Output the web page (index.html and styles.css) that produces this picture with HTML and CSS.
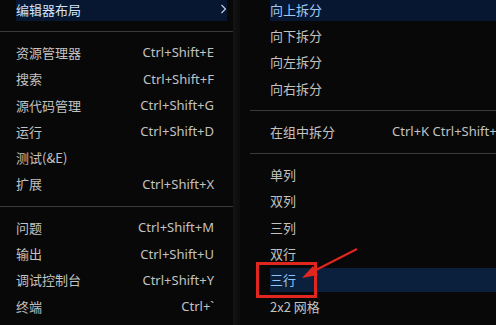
FILE: index.html
```html
<!DOCTYPE html>
<html lang="zh">
<head>
<meta charset="utf-8">
<link rel="stylesheet" href="styles.css">
</head>
<body>
<div class="screen">
  <div class="menu left">
    <div class="row hl"><span class="label">编辑器布局</span><svg class="chev" width="7" height="10" viewBox="0 0 7 10"><polyline points="1.5,1 5.5,5 1.5,9" fill="none" stroke="#c8d4e6" stroke-width="1.1"/></svg></div>
    <div class="sep"></div>
    <div class="row"><span class="label">资源管理器</span><span class="key">Ctrl+Shift+E</span></div>
    <div class="row"><span class="label">搜索</span><span class="key">Ctrl+Shift+F</span></div>
    <div class="row"><span class="label">源代码管理</span><span class="key">Ctrl+Shift+G</span></div>
    <div class="row"><span class="label">运行</span><span class="key">Ctrl+Shift+D</span></div>
    <div class="row"><span class="label">测试(&amp;E)</span></div>
    <div class="row"><span class="label">扩展</span><span class="key">Ctrl+Shift+X</span></div>
    <div class="sep"></div>
    <div class="row"><span class="label">问题</span><span class="key">Ctrl+Shift+M</span></div>
    <div class="row"><span class="label">输出</span><span class="key">Ctrl+Shift+U</span></div>
    <div class="row"><span class="label">调试控制台</span><span class="key">Ctrl+Shift+Y</span></div>
    <div class="row"><span class="label">终端</span><span class="key">Ctrl+`</span></div>
  </div>
  <div class="gutter"></div>
  <div class="menu right">
    <div class="row hl"><span class="label">向上拆分</span></div>
    <div class="row"><span class="label">向下拆分</span></div>
    <div class="row"><span class="label">向左拆分</span></div>
    <div class="row"><span class="label">向右拆分</span></div>
    <div class="sep"></div>
    <div class="row"><span class="label">在组中拆分</span><span class="key">Ctrl+K Ctrl+Shift+\</span></div>
    <div class="sep"></div>
    <div class="row"><span class="label">单列</span></div>
    <div class="row"><span class="label">双列</span></div>
    <div class="row"><span class="label">三列</span></div>
    <div class="row"><span class="label">双行</span></div>
    <div class="row hl2"><span class="label">三行</span></div>
    <div class="row"><span class="label">2x2 网格</span></div>
  </div>
  <div class="redbox"></div>
  <svg class="arrow" width="496" height="325" viewBox="0 0 496 325">
    <line x1="357" y1="249" x2="312" y2="272" stroke="#e0261f" stroke-width="2"/>
    <polygon points="302,278 313,266 318,275" fill="#e0261f"/>
  </svg>
</div>
</body>
</html>
```
FILE: styles.css
```css
html, body {
  margin: 0;
  padding: 0;
  background: #080808;
  overflow: hidden;
}
.screen {
  position: relative;
  width: 496px;
  height: 325px;
  overflow: hidden;
  display: flex;
  font-family: "Noto Sans", "Noto Sans CJK SC", sans-serif;
  font-size: 13px;
  color: #c2c2c2;
}
.menu {
  display: flex;
  flex-direction: column;
  margin-top: -4px;
  background: #080808;
}
.left {
  width: 233px;
  flex: none;
}
.gutter {
  width: 7px;
  flex: none;
  background: linear-gradient(to right, #141414, #0c0c0c);
}
.right {
  flex: 1;
  min-width: 0;
}
.row {
  height: 26.3px;
  flex: none;
  display: flex;
  align-items: center;
  justify-content: space-between;
  padding: 1px 0;
  box-sizing: border-box;
  background-clip: content-box;
  white-space: nowrap;
}
.left .row {
  padding-left: 16px;
  padding-right: 19px;
}
.right .row {
  padding-left: 30px;
  padding-right: 0;
}
.label {
  font-family: "Noto Sans CJK SC", sans-serif;
}
.right .key {
  margin-left: auto;
  padding-left: 10px;
  width: 104px;
  flex: none;
  overflow: hidden;
}
.hl {
  background-color: #071631;
  color: #d3e2f7;
}
.right .hl {
  color: #9ccaf4;
}
.left .row.hl {
  padding-right: 6px;
}
.chev {
  display: block;
  flex: none;
}
.hl2 {
  background-color: #0b203d;
  color: #8fc4f6;
}
.sep {
  height: 17px;
  flex: none;
}
.sep::after {
  content: "";
  display: block;
  height: 1px;
  margin-top: 9px;
  background: #3a3a3a;
}
.right .sep::after {
  margin-left: 10px;
}
.redbox {
  position: absolute;
  left: 256px;
  top: 262px;
  width: 61px;
  height: 36px;
  border: 3px solid #e0261f;
  box-sizing: border-box;
}
.arrow {
  position: absolute;
  left: 0;
  top: 0;
  pointer-events: none;
}
```
